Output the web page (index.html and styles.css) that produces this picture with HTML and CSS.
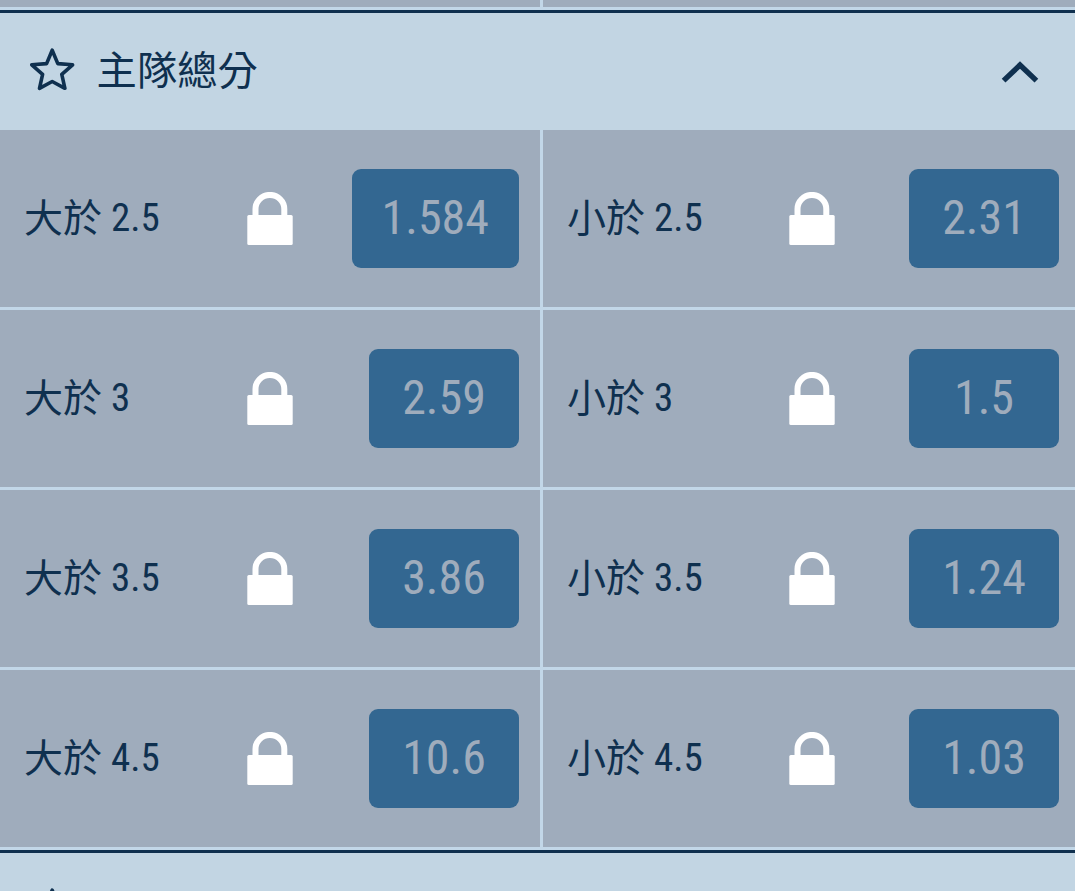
FILE: index.html
```html
<!DOCTYPE html>
<html lang="zh-Hant">
<head>
<meta charset="utf-8">
<title>主隊總分</title>
<link rel="stylesheet" href="styles.css">
</head>
<body>
<svg width="0" height="0" class="defs">
  <symbol id="star" viewBox="0 0 46 44"><path d="M22.2 2.2 L27.8 15.6 L42.6 16.8 L31.8 26.3 L34.9 40.3 L22.2 33.5 L9.5 40.3 L12.6 26.3 L1.8 16.8 L16.6 15.6 Z" fill="none" stroke="currentColor" stroke-width="3.6" stroke-linejoin="round"/></symbol>
  <symbol id="lock" viewBox="0 0 46 53"><path d="M8.5 24V17a14.3 14 0 0 1 28.8 0V24" fill="none" stroke="#fff" stroke-width="6"/><rect x="0.3" y="23" width="45.4" height="30" rx="1.5" fill="#fff"/></symbol>
</svg>
<main class="markets">
  <div class="grid grid-tail"><div class="cell"></div><div class="cell"></div></div>
  <header class="market-head">
    <svg class="star"><use href="#star"/></svg>
    <h2 class="title">主隊總分</h2>
    <svg class="chevron" viewBox="0 0 38 22"><path d="M2.6 19.6 L19 4 L35.4 19.6" fill="none" stroke="currentColor" stroke-width="5.4"/></svg>
  </header>
  <div class="grid">
    <div class="cell"><span class="label">大於 <span class="num">2.5</span></span><svg class="lock"><use href="#lock"/></svg><span class="odds"><b>1.584</b></span></div>
    <div class="cell"><span class="label">小於 <span class="num">2.5</span></span><svg class="lock"><use href="#lock"/></svg><span class="odds"><b>2.31</b></span></div>
    <div class="cell"><span class="label">大於 <span class="num">3</span></span><svg class="lock"><use href="#lock"/></svg><span class="odds"><b>2.59</b></span></div>
    <div class="cell"><span class="label">小於 <span class="num">3</span></span><svg class="lock"><use href="#lock"/></svg><span class="odds"><b>1.5</b></span></div>
    <div class="cell"><span class="label">大於 <span class="num">3.5</span></span><svg class="lock"><use href="#lock"/></svg><span class="odds"><b>3.86</b></span></div>
    <div class="cell"><span class="label">小於 <span class="num">3.5</span></span><svg class="lock"><use href="#lock"/></svg><span class="odds"><b>1.24</b></span></div>
    <div class="cell"><span class="label">大於 <span class="num">4.5</span></span><svg class="lock"><use href="#lock"/></svg><span class="odds"><b>10.6</b></span></div>
    <div class="cell"><span class="label">小於 <span class="num">4.5</span></span><svg class="lock"><use href="#lock"/></svg><span class="odds"><b>1.03</b></span></div>
  </div>
  <header class="market-head">
    <svg class="star"><use href="#star"/></svg>
  </header>
</main>
</body>
</html>
```
FILE: styles.css
```css
* { box-sizing: border-box; }
html, body { margin: 0; height: 891px; overflow: hidden; }
body { background: #c2d5e3; color: #0f304f; font-family: "Roboto Condensed", Roboto, "Noto Sans CJK TC", sans-serif; font-stretch: 75%; }
.defs { display: block; }
.markets { width: 1080px; height: 891px; overflow: hidden; }
.grid { display: grid; grid-template-columns: 540px 537px; grid-auto-rows: 177px; gap: 3px; padding-bottom: 3px; background: #c2d7e8; }
.grid-tail { grid-auto-rows: 7px; }
.cell { display: grid; grid-template-columns: 1fr 46px 1fr; align-items: center; padding: 0 21px; background: #9facbc; }
.market-head { display: flex; align-items: center; height: 120px; padding: 0 41px 0 30px; border-top: 3px solid #0f304f; }
.star { width: 46px; height: 44px; margin-bottom: 3px; }
.title { flex: 1; margin: 0 0 0 20.6px; font-size: 40.3px; line-height: 60px; font-weight: 400; }
.chevron { width: 38px; height: 22px; margin-top: 1px; }
.label { padding-left: 3px; font-size: 39px; line-height: 60px; white-space: nowrap; }
.num { line-height: 1; vertical-align: 1px; }
.lock { width: 46px; height: 53px; }
.odds { justify-self: end; display: flex; align-items: center; justify-content: center; min-width: 150px; height: 99px; padding: 0 30px 2px; border-radius: 9px; background: #336791; color: #9facbc; }
.odds b { font-weight: 400; font-size: 48px; }
```
